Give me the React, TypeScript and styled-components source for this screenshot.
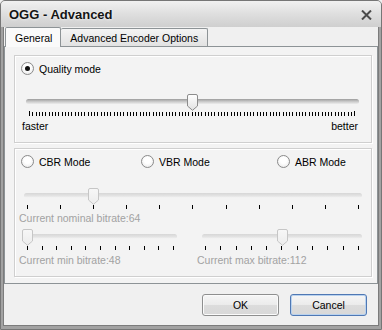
import styled, { createGlobalStyle } from 'styled-components'

const Global = createGlobalStyle`
    html, body {
        margin:0;
        padding:0;
        background:#f0f0f0;
    }
    * {
        box-sizing:border-box;
    }
`

const Window = styled.div`
    width:382px;
    height:330px;
    display:flex;
    flex-direction:column;
    border:1px solid #767676;
    border-radius:5px 5px 0 0;
    padding:0 2px 3px 2px;
    background:#a2a2a2;
    font-family:"Liberation Sans", Arial, sans-serif;
    font-size:10.5px;
    color:#000;
`
const TitleBar = styled.div`
    height:26px;
    margin:0 -2px;
    padding:0 8px 0 8px;
    display:flex;
    align-items:center;
    justify-content:space-between;
    border-radius:4px 4px 0 0;
    background:linear-gradient(#f1f1f1 0%, #e0e0e0 45%, #cfcfcf 100%);
`
const Title = styled.span`
    font-size:13px;
    font-weight:bold;
    color:#141414;
    text-shadow:0 0 3px #fff;
    margin-top:1px;
`
const CloseIcon = styled.svg`
    width:11px;
    height:10px;
    margin-right:1px;
    margin-top:1px;
`
const Client = styled.div`
    flex:1;
    display:flex;
    flex-direction:column;
    border:1px solid #7c7c7c;
    border-top:none;
    background:#f0f0f0;
`
const TabStrip = styled.div`
    height:19px;
    display:flex;
    align-items:flex-end;
    padding-left:1px;
`
const Tab = styled.div<{ $active?: boolean }>`
    position:relative;
    z-index:${p => (p.$active ? 2 : 1)};
    height:${p => (p.$active ? '20px' : '18px')};
    margin-bottom:${p => (p.$active ? '-1px' : '0')};
    padding:${p => (p.$active ? '4px 8px 0 9px' : '3px 9px 0 9px')};
    border:1px solid #8d9396;
    border-bottom:none;
    border-left:${p => (p.$active ? '1px solid #8d9396' : 'none')};
    border-radius:2px 2px 0 0;
    background:${p => (p.$active ? '#fafafa' : 'linear-gradient(#f4f4f4, #e2e2e2)')};
    white-space:nowrap;
`
const Panel = styled.div`
    height:238px;
    border:1px solid #8d9396;
    background:#f3f3f3;
    padding:8px 5px 0 9px;
    display:flex;
    flex-direction:column;
    gap:5px;
`
const Group = styled.div<{ $h: number }>`
    height:${p => p.$h}px;
    border:1px solid #cfcfcf;
    box-shadow:inset 1px 1px 0 #fff, 1px 1px 0 #fff;
    display:flex;
    flex-direction:column;
    padding-top:6px;
`
const RadioRow = styled.div<{ $cols: string }>`
    display:grid;
    grid-template-columns:${p => p.$cols};
    padding-left:6px;
`
const RadioItem = styled.label`
    display:flex;
    align-items:center;
    gap:5px;
    height:13px;
    white-space:nowrap;
`
const RadioCircle = styled.span<{ $checked?: boolean }>`
    width:13px;
    height:13px;
    border-radius:50%;
    border:1px solid #8a8a8a;
    background:radial-gradient(circle at 50% 40%, #ffffff 35%, #e4e4e4 100%);
    display:flex;
    align-items:center;
    justify-content:center;
    &::after {
        content:'';
        display:${p => (p.$checked ? 'block' : 'none')};
        width:5px;
        height:5px;
        border-radius:50%;
        background:#111;
    }
`
const SliderBox = styled.div<{ $w: number; $ml: number; $mt: number }>`
    position:relative;
    width:${p => p.$w}px;
    margin-left:${p => p.$ml}px;
    margin-top:${p => p.$mt}px;
`
const TrackArea = styled.div`
    height:17px;
    padding-top:5px;
`
const Track = styled.div<{ $disabled?: boolean }>`
    height:5px;
    border-radius:3px;
    background:${p =>
        p.$disabled
            ? 'linear-gradient(#d6d6d6, #e4e4e4 60%, #f6f6f6)'
            : 'linear-gradient(#9c9c9c, #c8c8c8 50%, #ececec)'};
`
const Thumb = styled.svg`
    position:absolute;
    top:0;
    width:11px;
    height:17px;
`
const Ticks = styled.div<{ $pad: number; $h: number }>`
    height:${p => p.$h}px;
    display:flex;
    justify-content:space-between;
    align-items:flex-end;
    padding:0 ${p => p.$pad}px;
`
const Tick = styled.span<{ $h: number }>`
    width:1px;
    height:${p => p.$h}px;
    background:#000;
`
const EndLabels = styled.div`
    display:flex;
    justify-content:space-between;
    margin:4px 13px 0 7px;
    line-height:13px;
`
const SliderRow = styled.div`
    display:flex;
`
const SliderCol = styled.div<{ $w?: number }>`
    width:${p => (p.$w ? `${p.$w}px` : 'auto')};
    margin-left:4px;
    display:flex;
    flex-direction:column;
`
const Caption = styled.div<{ $mt: number }>`
    color:#a2a2a2;
    line-height:13px;
    margin-top:${p => p.$mt}px;
    white-space:nowrap;
`
const Footer = styled.div`
    flex:1;
    display:flex;
    justify-content:flex-end;
    align-items:flex-start;
    gap:11px;
    padding:10px 11px 0 0;
`
const Button = styled.button<{ $default?: boolean }>`
    width:77px;
    height:22px;
    font-family:"Liberation Sans", Arial, sans-serif;
    font-size:10.5px;
    color:#000;
    border-radius:3px;
    border:1px solid ${p => (p.$default ? '#4f78b4' : '#8e8f8f')};
    box-shadow:${p => (p.$default ? 'inset 0 0 0 1px #b9d2ee' : 'inset 0 0 0 1px #fbfbfb')};
    background:linear-gradient(#f6f6f6 0%, #ebebeb 50%, #dcdcdc 51%, #d8d8d8 100%);
    padding:0;
`

type SliderProps = {
    width: number
    value: number
    ticks: number
    pad: number
    ml: number
    mt: number
    disabled?: boolean
    tickH: number
    longEnds?: boolean
}

const Slider = ({ width, value, ticks, pad, ml, mt, disabled, tickH, longEnds }: SliderProps) => {
    const left = pad + value * (width - 2 * pad - 1) - 5
    const stroke = disabled ? '#c6c6c6' : '#8c8c8c'
    const top = disabled ? '#f7f7f7' : '#ffffff'
    const bottom = disabled ? '#ececec' : '#e2e2e2'
    const gid = `g${width}${Math.round(value * 100)}`
    return (
        <SliderBox $w={width} $ml={ml} $mt={mt}>
            <TrackArea>
                <Track $disabled={disabled} />
            </TrackArea>
            <Thumb style={{ left }} viewBox="0 0 11 17">
                <defs>
                    <linearGradient id={gid} x1="0" y1="0" x2="0" y2="1">
                        <stop offset="0" stopColor={top} />
                        <stop offset="1" stopColor={bottom} />
                    </linearGradient>
                </defs>
                <path
                    d="M2 0.5 H9 Q10.5 0.5 10.5 2 V12 L5.5 16.3 L0.5 12 V2 Q0.5 0.5 2 0.5 Z"
                    fill={`url(#${gid})`}
                    stroke={stroke}
                />
            </Thumb>
            <Ticks $pad={pad} $h={longEnds ? tickH + 1 : tickH}>
                {Array.from({ length: ticks }).map((_, i) => (
                    <Tick key={i} $h={longEnds && (i === 0 || i === ticks - 1) ? tickH + 1 : tickH} />
                ))}
            </Ticks>
        </SliderBox>
    )
}

const App = () => {
    return (
        <>
            <Global />
            <Window>
                <TitleBar>
                    <Title>OGG - Advanced</Title>
                    <CloseIcon viewBox="0 0 11 10">
                        <path d="M1 0.5 L10 9.5 M10 0.5 L1 9.5" stroke="#4b4b4b" strokeWidth="2" />
                    </CloseIcon>
                </TitleBar>
                <Client>
                    <TabStrip>
                        <Tab $active>General</Tab>
                        <Tab>Advanced Encoder Options</Tab>
                    </TabStrip>
                    <Panel>
                        <Group $h={88}>
                            <RadioRow $cols="auto">
                                <RadioItem>
                                    <RadioCircle $checked />
                                    Quality mode
                                </RadioItem>
                            </RadioRow>
                            <Slider width={333} value={0.5} ticks={101} pad={3} ml={11} mt={19} tickH={4} longEnds />
                            <EndLabels>
                                <span>faster</span>
                                <span>better</span>
                            </EndLabels>
                        </Group>
                        <Group $h={129}>
                            <RadioRow $cols="120px 136px auto">
                                <RadioItem>
                                    <RadioCircle />
                                    CBR Mode
                                </RadioItem>
                                <RadioItem>
                                    <RadioCircle />
                                    VBR Mode
                                </RadioItem>
                                <RadioItem>
                                    <RadioCircle />
                                    ABR Mode
                                </RadioItem>
                            </RadioRow>
                            <SliderCol>
                                <Slider width={338} value={0.2} ticks={11} pad={3} ml={5} mt={20} tickH={4} disabled />
                                <Caption $mt={3}>Current nominal bitrate:64</Caption>
                            </SliderCol>
                            <SliderRow>
                                <SliderCol $w={174}>
                                    <Slider width={153} value={0} ticks={11} pad={3} ml={5} mt={4} tickH={4} disabled />
                                    <Caption $mt={4}>Current min bitrate:48</Caption>
                                </SliderCol>
                                <SliderCol>
                                    <Slider width={160} value={0.5} ticks={11} pad={3} ml={5} mt={4} tickH={4} disabled />
                                    <Caption $mt={4}>Current max bitrate:112</Caption>
                                </SliderCol>
                            </SliderRow>
                        </Group>
                    </Panel>
                    <Footer>
                        <Button>OK</Button>
                        <Button $default>Cancel</Button>
                    </Footer>
                </Client>
            </Window>
        </>
    )
}

export default App
